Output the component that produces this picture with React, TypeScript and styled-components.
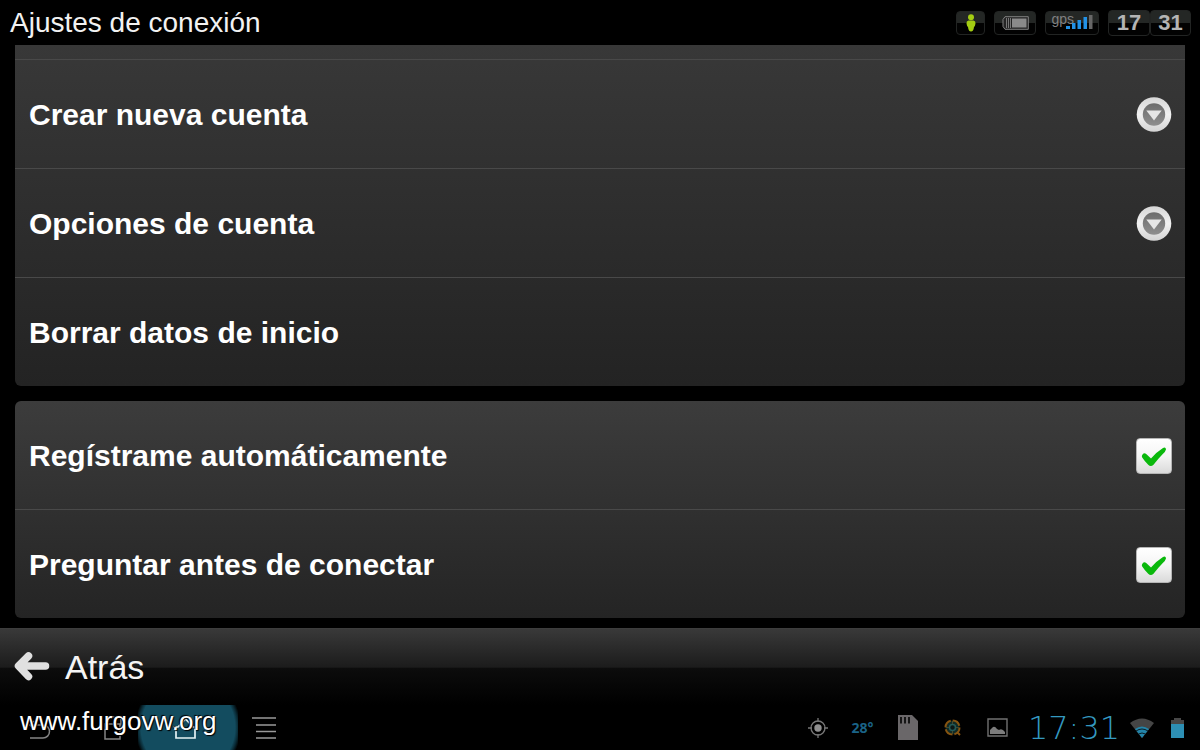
import React from 'react';
import styled, { createGlobalStyle } from 'styled-components';

const GlobalStyle = createGlobalStyle`
  * { box-sizing: border-box; }
  body {
    margin: 0;
    background: #000;
    color: #fff;
    font-family: "Liberation Sans", Arial, sans-serif;
  }
  button {
    margin: 0;
    padding: 0;
    border: 0;
    background: none;
    color: inherit;
    font: inherit;
    text-align: left;
    cursor: pointer;
  }
  svg { display: block; flex: none; }
`;

const Screen = styled.div`
  display: flex;
  flex-direction: column;
  min-height: 100vh;
`;

const Header = styled.header`
  display: flex;
  align-items: center;
  justify-content: space-between;
  height: 45px;
  padding: 0 9px 0 10px;
`;

const Title = styled.h1`
  margin: 0;
  font-size: 28px;
  line-height: 44px;
  font-weight: 400;
  color: #f2f2f2;
`;

const StatusGroup = styled.div`
  display: flex;
  align-items: center;
  gap: 9px;
`;

const Chip = styled.span<{ $width: number }>`
  display: flex;
  align-items: center;
  justify-content: center;
  width: ${(p) => p.$width}px;
  height: 24px;
  border: 1px solid #222423;
  border-radius: 4px;
  background: linear-gradient(#242725 0 48%, #020202 52% 100%);
`;

const Clock = styled.div`
  display: flex;
`;

const ClockCell = styled(Chip)`
  height: 26px;
  font-size: 22px;
  font-weight: 700;
  color: #b4b4b4;
`;

const Settings = styled.main`
  display: flex;
  flex-direction: column;
  flex: 1;
  gap: 15px;
  padding: 0 15px 10px;
`;

const Panel = styled.section<{ $scrolled?: boolean }>`
  border-radius: ${(p) => (p.$scrolled ? '0 0 6px 6px' : '6px')};
  background: ${(p) =>
    p.$scrolled ? 'linear-gradient(#383838, #232323)' : 'linear-gradient(#3c3c3c, #242424)'};
`;

const ScrolledEdge = styled.div`
  height: 15px;
  border-bottom: 1px solid #494949;
`;

const rowStyles = `
  display: flex;
  align-items: center;
  justify-content: space-between;
  width: 100%;
  padding: 37px 13px 35px 14px;
  font-size: 30px;
  line-height: 36px;
  font-weight: 700;
  cursor: pointer;
`;

const Row = styled.div`
  & + & { border-top: 1px solid #494949; }
`;

const RowButton = styled.button`
  ${rowStyles}
`;

const RowLabel = styled.label`
  ${rowStyles}
`;

const TickBox = styled.span`
  display: grid;
  place-items: center;
  width: 36px;
  height: 36px;
  & > * { grid-area: 1 / 1; }
  & > svg { pointer-events: none; visibility: hidden; }
  & > input:checked + svg { visibility: visible; }
`;

const TickInput = styled.input`
  appearance: none;
  width: 36px;
  height: 36px;
  margin: 0;
  border: 1px solid #b5b5b5;
  border-radius: 4px;
  background: linear-gradient(#fff, #f5f5f5 50%, #dadada);
`;

const BackBar = styled.footer`
  height: 77px;
  border-top: 1px solid #3d3d3d;
  background: linear-gradient(#393939, #1c1c1c 50%, #0c0c0c 52%, #000);
`;

const BackButton = styled.button`
  display: flex;
  align-items: center;
  gap: 15px;
  padding: 0 14px;
  font-size: 34px;
  line-height: 76px;
  color: #f4f4f4;
`;

const SystemBar = styled.nav`
  position: relative;
  display: flex;
  align-items: center;
  justify-content: space-between;
  height: 45px;
  overflow: hidden;
`;

const NavButtons = styled.div`
  display: flex;
  align-items: center;
  height: 45px;
`;

const NavButton = styled.button<{ $width: number; $active?: boolean }>`
  display: flex;
  align-items: center;
  justify-content: center;
  width: ${(p) => p.$width}px;
  height: 45px;
  background: ${(p) =>
    p.$active ? 'radial-gradient(circle at 50% 50%, #134c5f 0 47px, #092a35 50px, #000 53px)' : 'none'};
`;

const Tray = styled.div`
  display: flex;
  align-items: center;
  padding-right: 2px;
`;

const TrayItem = styled.span<{ $width: number }>`
  display: flex;
  align-items: center;
  justify-content: center;
  width: ${(p) => p.$width}px;
  height: 45px;
`;

const Temperature = styled(TrayItem)`
  font-family: "Noto Sans", sans-serif;
  font-size: 14px;
  font-weight: 700;
  color: #1a6387;
`;

const SystemTime = styled.time`
  font-family: "DejaVu Sans", sans-serif;
  font-size: 32px;
  line-height: 44px;
  font-weight: 200;
  color: #3499c0;
`;

const Watermark = styled.a`
  position: absolute;
  left: 20px;
  top: 0;
  font-size: 26px;
  line-height: 32px;
  color: #fff;
  text-decoration: none;
  text-shadow: 1px 1px 1px #000, -1px -1px 1px #000;
`;

const ExpandIcon = () => (
  <svg width="36" height="36" viewBox="0 0 36 36" aria-hidden="true">
    <defs>
      <linearGradient id="ring" x1="0" y1="0" x2="0" y2="1">
        <stop offset="0" stopColor="#d6d6d6" />
        <stop offset="0.5" stopColor="#f1f1f1" />
        <stop offset="1" stopColor="#d4d4d4" />
      </linearGradient>
      <linearGradient id="core" x1="0" y1="0" x2="0" y2="1">
        <stop offset="0" stopColor="#6c6c6c" />
        <stop offset="1" stopColor="#8f8f8f" />
      </linearGradient>
    </defs>
    <circle cx="18" cy="17.500" r="17.3" fill="url(#ring)" />
    <circle cx="18" cy="17.500" r="11.2" fill="url(#core)" />
    <path d="M10.300 13.500h15.400L18 23.500z" fill="#e6e6e6" />
  </svg>
);

const CheckIcon = () => (
  <svg width="36" height="36" viewBox="0 0 36 36" aria-hidden="true">
    <path
      d="M6 17.500Q7.500 14 10.500 16.200L15 20.500Q20.500 14 27 10Q29.800 8.800 30 11.400Q29.500 13.500 26.800 16Q21.500 21.500 17.500 26.700Q14.800 29.200 12.200 26.800Q8.500 23.200 6.200 19.600Q5.600 18.500 6 17.500z"
      fill="#0ab80c"
    />
  </svg>
);

const PersonIcon = () => (
  <svg width="12" height="18" viewBox="0 0 12 18" aria-label="Conectado">
    <circle cx="6" cy="3.200" r="3" fill="#a3cc12" />
    <path d="M3.500 6.500h5Q10.800 7 10.500 9.500 10.200 12 9 13 8.500 17.500 6 17.500T3 13Q1.800 12 1.500 9.500 1.200 7 3.500 6.500z" fill="#a3cc12" />
  </svg>
);

const BatteryChip = () => (
  <svg width="27" height="14" viewBox="0 0 27 14" aria-label="Batería">
    <path d="M3 .7h23.300v12.600H3L1 10.500v-7z" fill="#242424" stroke="#808080" />
    <path d="M4.500 2v10M6.500 2v10M8.500 2v10" stroke="#777" />
    <path d="M10 2.500h14.500v9H10z" fill="#8a8a8a" />
  </svg>
);

const SignalIcon = () => (
  <svg width="27" height="14" viewBox="0 0 27 14" aria-label="Señal">
    <path d="M0 11h4v3H0zM6 8h3.500v6H6zM11.500 5H15v9h-3.500zM17.500 2H21v12h-3.500z" fill="#2291e6" />
    <path d="M23 0h3.500v14H23z" fill="#676767" />
  </svg>
);

const GpsChip = styled(Chip)`
  align-items: flex-start;
  justify-content: flex-end;
  padding-right: 5px;
  font-size: 14px;
  line-height: 14px;
  color: #808080;
  & > svg { align-self: flex-end; margin: 0 0 5px -8px; }
`;

const ArrowLeft = () => (
  <svg width="36" height="30" viewBox="0 0 36 30" aria-hidden="true">
    <path d="M14.500 4 4.500 14 14.500 24.500M5 14h26.500" fill="none" stroke="#e0e0e0" strokeWidth="7.500" strokeLinecap="round" strokeLinejoin="round" />
  </svg>
);

const expandable = ['Crear nueva cuenta', 'Opciones de cuenta'];
const toggles = ['Regístrame automáticamente', 'Preguntar antes de conectar'];

export default function App() {
  return (
    <Screen>
      <GlobalStyle />
      <Header>
        <Title>Ajustes de conexión</Title>
        <StatusGroup>
          <Chip $width={29}><PersonIcon /></Chip>
          <Chip $width={42}><BatteryChip /></Chip>
          <GpsChip $width={54}>gps<SignalIcon /></GpsChip>
          <Clock>
            <ClockCell $width={42}>17</ClockCell>
            <ClockCell $width={41}>31</ClockCell>
          </Clock>
        </StatusGroup>
      </Header>

      <Settings>
        <Panel $scrolled>
          <ScrolledEdge />
          {expandable.map((name) => (
            <Row key={name}>
              <RowButton type="button" aria-expanded="false">
                {name}
                <ExpandIcon />
              </RowButton>
            </Row>
          ))}
          <Row>
            <RowButton type="button">Borrar datos de inicio</RowButton>
          </Row>
        </Panel>
        <Panel>
          {toggles.map((name) => (
            <Row key={name}>
              <RowLabel>
                {name}
                <TickBox>
                  <TickInput type="checkbox" defaultChecked />
                  <CheckIcon />
                </TickBox>
              </RowLabel>
            </Row>
          ))}
        </Panel>
      </Settings>

      <BackBar>
        <BackButton type="button">
          <ArrowLeft />
          Atrás
        </BackButton>
      </BackBar>

      <SystemBar>
        <NavButtons>
          <NavButton $width={88} type="button" aria-label="Volver">
            <svg width="32" height="24" viewBox="0 0 32 24" fill="none" stroke="#858585" strokeWidth="1.500">
              <path d="M6 5 2 9l4 4M2 9h13a6.500 6.500 0 0 1 0 13H2" />
            </svg>
          </NavButton>
          <NavButton $width={50} type="button" aria-label="Recientes">
            <svg width="20" height="24" viewBox="0 0 20 24" fill="none" stroke="#858585" strokeWidth="1.500">
              <path d="M2 8h15v15H2zM5 6V1h13v14" />
            </svg>
          </NavButton>
          <NavButton $width={100} $active type="button" aria-label="Inicio">
            <svg width="32" height="22" viewBox="0 0 32 22" fill="none" stroke="#e6f3f5" strokeWidth="1.700">
              <path d="M4 10v11h19V10M1 10h5l7.500-8 7.500 8h5" />
            </svg>
          </NavButton>
          <NavButton $width={52} type="button" aria-label="Menú">
            <svg width="24" height="22" viewBox="0 0 24 22" stroke="#999" strokeWidth="1.500">
              <path d="M0 1h24M4 8h20M4 14.500h20M4 21h20" />
            </svg>
          </NavButton>
        </NavButtons>

        <Tray>
          <TrayItem $width={45}>
            <svg width="20" height="20" viewBox="0 0 20 20" aria-label="Ubicación">
              <circle cx="10" cy="10" r="7" fill="none" stroke="#777" strokeWidth="1.300" />
              <circle cx="10" cy="10" r="3.700" fill="#909090" />
              <path d="M10 0v4M10 16v4M0 10h4M16 10h4" stroke="#777" strokeWidth="1.300" />
            </svg>
          </TrayItem>
          <Temperature $width={45}>28°</Temperature>
          <TrayItem $width={45}>
            <svg width="22" height="25" viewBox="0 0 22 25" aria-label="Tarjeta SD">
              <path d="M1 0h14l6 6v19H1z" fill="#6a6769" />
              <path d="M4 2v6.500M8 2v6.500M12 2v6.500" stroke="#161616" strokeWidth="2" />
            </svg>
          </TrayItem>
          <TrayItem $width={45}>
            <svg width="17" height="18" viewBox="0 0 17 18" aria-label="Rastreador">
              <circle cx="8.500" cy="8.500" r="7" fill="#102a26" stroke="#865411" strokeWidth="2" strokeDasharray="9 2" />
              <circle cx="8.500" cy="8.500" r="3" fill="#0b1715" stroke="#245a57" strokeWidth="1.500" />
              <path d="M8.500 2v3M8.500 12v3M2 8.500h3M12 8.500h3" stroke="#44482b" />
              <path d="M13 13l3 3" stroke="#865411" strokeWidth="2" />
            </svg>
          </TrayItem>
          <TrayItem $width={45}>
            <svg width="21" height="19" viewBox="0 0 21 19" aria-label="Imagen">
              <path d="M1 1h19v17H1z" fill="none" stroke="#707070" strokeWidth="1.400" />
              <path d="M3 16v-4l3-3q2-1 4 2l2 1q3-2 6 2v2z" fill="#7c7c7c" />
            </svg>
          </TrayItem>
          <TrayItem $width={108}><SystemTime>17:31</SystemTime></TrayItem>
          <TrayItem $width={28}>
            <svg width="24" height="20" viewBox="0 0 24 20" aria-label="Wi-Fi">
              <path d="M0 5Q12-4 24 5L12 20z" fill="#454545" />
              <path d="M5 11q7-5 14 0l-7 9z" fill="#2385aa" />
              <path d="M6 13q6-4 12 0M8.500 16q3.500-2 7 0" fill="none" stroke="#0b1b21" />
            </svg>
          </TrayItem>
          <TrayItem $width={42}>
            <svg width="13" height="20" viewBox="0 0 13 20" aria-label="Batería">
              <path d="M0 2h3V0h7v2h3v5H0z" fill="#484848" />
              <path d="M0 6h13v14H0z" fill="#2d8fb4" />
            </svg>
          </TrayItem>
        </Tray>
        <Watermark href="#inicio">www.furgovw.org</Watermark>
      </SystemBar>
    </Screen>
  );
}
